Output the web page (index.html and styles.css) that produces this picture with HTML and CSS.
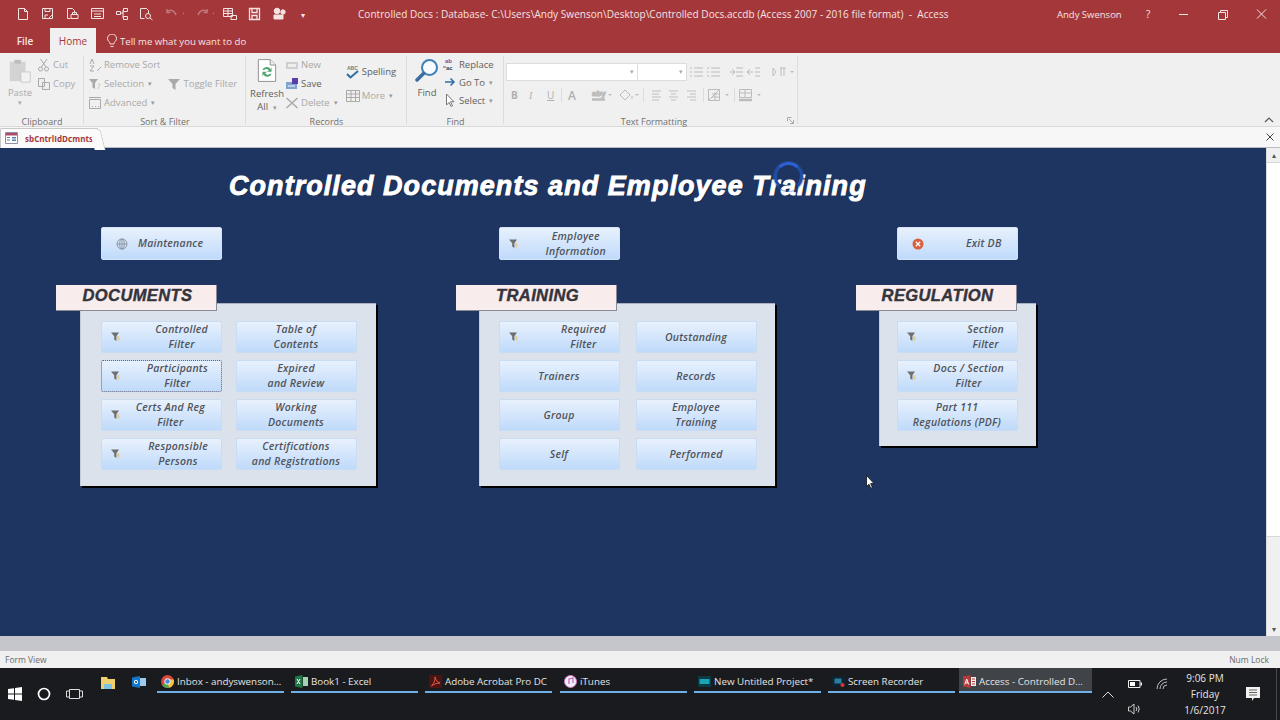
FILE: index.html
```html
<!DOCTYPE html>
<html lang="en">
<head>
<meta charset="utf-8">
<title>Controlled Docs</title>
<link rel="stylesheet" href="styles.css">
</head>
<body>
<svg class="defs" width="0" height="0" aria-hidden="true">
  <symbol id="funnel" viewBox="0 0 12 12"><path d="M1 1.500h8L6.400 5.200V10L4.200 8.600V5.200z" fill="#6f6f6f"/><path d="M7.200 5.500l2.200-.6L8.800 7.600l1.400-.3-2.200 3.600.5-2.700-1.200.2z" fill="#e3c98a"/></symbol>
</svg>
<header class="titlebar">
  <div class="qat">
    <svg width="300" height="16" viewBox="0 0 300 16" fill="none" stroke="#f4e3e3" stroke-width="1">
      <path d="M18.500 2.500h6l3 3v8h-9zM24.500 2.500v3h3"/>
      <path d="M42.500 2.500h10v10h-10zM45 2.500v3h5v-3M45 12v-3h3M48 13l4-4"/>
      <path d="M67.500 2.500h5l2 2v3M67.500 2.500v10h3M71 8.500h7v4h-7zM72.500 8.500v-2h4v2"/>
      <path d="M91.500 2.500h12v10h-12zM91.500 5h12M94 8h7M94 10.500h7"/>
      <path d="M116.500 5.500h4v3h-4zM123.500 2.500h4v3h-4zM123.500 10.500h4v3h-4zM120.500 7h3M123 4v8"/>
      <path d="M140.500 2.500h6l2 2v3M140.500 2.500v10h4"/><circle cx="148" cy="10" r="2.500"/><path d="M150 12l2.500 2"/>
      <path d="M167 6c3-3 7-2 9 3M167 3v3.500h3.500M183 7.500h1" stroke="#c07578" stroke-width="1.500"/>
      <path d="M207 6c-3-3-7-2-9 3M207 3v3.500h-3.500M213 7.500h1" stroke="#c07578" stroke-width="1.500"/>
      <path d="M223.500 2.500h9v8h-9zM223.500 5h9M223.500 7.500h9M228 2.500v8M231 9.500h5.500v4H231z"/>
      <path d="M249.500 2.500h10v11h-10zM252 2.500v4h5v-4M252 13.500v-4h5v4" stroke-width="1.300"/>
      <circle cx="277" cy="5" r="2.800" fill="#f4e3e3"/><circle cx="283" cy="6" r="2.200" fill="#f4e3e3"/><path d="M274 9h9v4h-9z" fill="#f4e3e3"/>
    </svg>
    <span class="qat-more">▾</span>
  </div>
  <div class="doc-title">Controlled Docs : Database- C:\Users\Andy Swenson\Desktop\Controlled Docs.accdb (Access 2007 - 2016 file format)  -  Access</div>
  <div class="user">Andy Swenson</div>
  <div class="help">?</div>
  <div class="winbtns">
    <svg width="90" height="14" viewBox="0 0 90 14" fill="none" stroke="#f4e3e3"><path d="M0 7.500h9"/><path d="M39.500 5.500h7v7h-7zM41.500 5.500v-2h7v7h-2"/><path d="M78 2.500l9 9M87 2.500l-9 9"/></svg>
  </div>
</header>
<nav class="tabs">
  <span class="tab-file">File</span>
  <span class="tab-home">Home</span>
  <span class="tell">
    <svg width="10" height="14" viewBox="0 0 10 14" fill="none" stroke="#f6e4e4"><path d="M3.200 10c0-2-2.700-3-2.700-5.500a4.500 4.500 0 0 1 9 0C9.500 7 6.800 8 6.800 10zM3.500 12.500h3"/></svg>
    Tell me what you want to do
  </span>
</nav>
<section class="ribbon">
  <div class="group g-clip">
    <div class="group-body clip-body">
      <div class="big paste">
        <svg width="24" height="26" viewBox="0 0 24 28"><path d="M1 4h17v21H1z" fill="#d3d3d3"/><path d="M6 2h7v4H6z" fill="#bdbdbd"/><path d="M13 15h10v11H13z" fill="#f2f2f2" stroke="#c9c9c9"/></svg>
        <span>Paste</span><span class="caret-line">▾</span>
      </div>
      <div class="stack">
        <span class="item"><svg width="14" height="14" viewBox="0 0 14 14" fill="none" stroke="#a9a9a9"><circle cx="3.500" cy="11" r="2"/><circle cx="9.500" cy="11" r="2"/><path d="M4.500 9L10 1M9 9L3.500 1"/></svg>Cut</span>
        <span class="item"><svg width="14" height="14" viewBox="0 0 14 14" fill="#eee" stroke="#aaa"><path d="M1.500 1.500h6v8h-6zM5.500 5.500h7v7h-7z"/></svg>Copy</span>
      </div>
    </div>
    <div class="group-label">Clipboard</div>
  </div>
  <div class="group g-sort">
    <div class="group-body sort-body">
      <div class="stack">
        <span class="item"><svg width="14" height="14" viewBox="0 0 14 14" fill="none" stroke="#a9a9a9"><path d="M2 6l2-5 2 5M2 8h4L2 13h4M9 13l4-4"/></svg>Remove Sort</span>
        <span class="item"><svg width="14" height="14" viewBox="0 0 14 14"><path d="M1 2h9L7 6v6L4.500 10.500V6z" fill="#a9a9a9"/><path d="M10 7l2 0-2 5" stroke="#ccc" fill="none"/></svg>Selection<i class="dd">▾</i></span>
        <span class="item"><svg width="14" height="14" viewBox="0 0 14 14" fill="none" stroke="#a9a9a9"><path d="M1.500 3.500h11v9h-11zM1 1.500h12M4 10.500h1M7 10.500h1M10 10.500h1"/></svg>Advanced<i class="dd">▾</i></span>
      </div>
      <span class="item toggle"><svg width="14" height="14" viewBox="0 0 14 14"><path d="M1 2h12L8.500 7v6L5.500 11V7z" fill="#a9a9a9"/></svg>Toggle Filter</span>
    </div>
    <div class="group-label">Sort &amp; Filter</div>
  </div>
  <div class="group g-rec">
    <div class="group-body rec-body">
      <div class="big refresh">
        <svg width="20" height="27" viewBox="0 0 22 27"><path d="M1.500 1.500h13l6 6v18h-19z" fill="#fff" stroke="#8a8a8a"/><path d="M14.500 1.500v6h6" fill="#eee" stroke="#8a8a8a"/><path d="M6 13a5 5 0 0 1 9-1l1-2v5h-5l2-1.500a3 3 0 0 0-5-.5zM16 17a5 5 0 0 1-9 1l-1 2v-5h5l-2 1.500a3 3 0 0 0 5 .5z" fill="#4fa36f"/></svg>
        <span class="active">Refresh</span><span class="active">All <i class="dd">▾</i></span>
      </div>
      <div class="stack rec-mid">
        <span class="item"><svg width="14" height="14" viewBox="0 0 14 14"><path d="M1 4h12v7H1z" fill="#cfcfcf"/><path d="M3 6h8v3H3z" fill="#eee"/></svg>New</span>
        <span class="item active"><svg width="14" height="14" viewBox="0 0 14 14"><path d="M1 5h11v7H1z" fill="#7fa4cf"/><path d="M7 1h6v6H7z" fill="#5b3ea8"/><path d="M3 9h7" stroke="#fff"/></svg>Save</span>
        <span class="item"><svg width="14" height="14" viewBox="0 0 14 14" fill="none" stroke="#a9a9a9" stroke-width="1.500"><path d="M1.500 2l11 10M12.500 2l-11 10"/></svg>Delete<i class="dd">▾</i></span>
      </div>
      <div class="stack rec-right">
        <span class="item active"><svg width="14" height="16" viewBox="0 0 14 16"><text x="1" y="6" class="abc">ABC</text><path d="M1 10l3.500 3.500L12 7" fill="none" stroke="#2f6ea5" stroke-width="2"/></svg>Spelling</span>
        <span class="item"><svg width="14" height="14" viewBox="0 0 14 14" fill="none" stroke="#aaa"><path d="M.5 1.500h13v11H.5zM.5 5h13M.5 8.500h13M5 1.500v11M9.500 1.500v11"/></svg>More<i class="dd">▾</i></span>
      </div>
    </div>
    <div class="group-label">Records</div>
  </div>
  <div class="group g-find">
    <div class="group-body find-body">
      <div class="big find">
        <svg width="24" height="26" viewBox="0 0 24 26" fill="none" stroke="#3f7fb8"><circle cx="14.500" cy="9.500" r="7.500" stroke-width="2" fill="#f8fbfd"/><path d="M8.500 15.500L2 22" stroke-width="3.500" stroke-linecap="round" stroke="#3a6ea0"/></svg>
        <span class="active">Find</span>
      </div>
      <div class="stack find-stack">
        <span class="item active"><svg width="14" height="14" viewBox="0 0 14 14"><text x="2" y="6" class="ab">ab</text><text x="3" y="12.500" class="ac">ac</text><path d="M0 10h3" stroke="#2f6ea5"/></svg>Replace</span>
        <span class="item active"><svg width="14" height="14" viewBox="0 0 14 14" fill="none" stroke="#2f6ea5" stroke-width="1.500"><path d="M2 7h9M7.500 3.500L11 7l-3.500 3.500"/></svg>Go To<i class="dd">▾</i></span>
        <span class="item active"><svg width="14" height="14" viewBox="0 0 14 14" fill="#fff" stroke="#777"><path d="M3.500 1v11l2.500-2.500 2 4 1.500-.7-2-4h3.500z"/></svg>Select<i class="dd">▾</i></span>
      </div>
    </div>
    <div class="group-label">Find</div>
  </div>
  <div class="group g-text">
    <div class="group-body text-body">
      <div class="text-row row-a">
        <span class="combo combo-font">▾</span><span class="combo combo-size">▾</span>
        <svg class="r1" width="106" height="14" viewBox="0 0 106 14" fill="none" stroke="#bcbcbc"><path d="M5 3h9M5 7h9M5 11h9M1 3h2M1 7h2M1 11h2M22 3h9M22 7h9M22 11h9M18 3h2M18 7h2M18 11h2M41 7h4M43 4l3 3-3 3M47 3h7M47 7h7M47 11h7M64 7h-5M61 4l-3 3 3 3M66 3h5M66 7h5M66 11h5"/><path d="M91 3h6M92 3v8M95 3v8M84 3v8l3-4z"/><path d="M101 6h4l-2 2z" fill="#bcbcbc" stroke="none"/></svg>
      </div>
      <div class="text-row row-b">
        <b>B</b><i class="it">I</i><u>U</u>
        <span class="sep"></span>
        <span class="fa">A</span>
        <svg width="175" height="16" viewBox="0 0 175 16" fill="none" stroke="#bcbcbc"><text x="2" y="9" class="aby">aby</text><path d="M2 12.500h13" stroke-width="2.500"/><path d="M30 8l5-5 5 5-5 5zM42 9v3"/><path d="M53.500 1v14M113.500 1v14M144.500 1v14" stroke="#dcdcdc"/><path d="M62 4h9M62 7h7M62 10h9M62 13h7M79 4h9M81 7h5M79 10h9M81 13h5M97 4h9M100 7h6M97 10h9M100 13h6" stroke-width="1.500" stroke="#cfcfcf"/><path d="M118.500 2.500h11v11h-11zM118.500 13.500l11-11M122 7h7M122 10h7M125 5v8"/><path d="M149.500 2.500h12v8h-12zM149.500 6h12M155 2.500v8"/><path d="M149 13h13" stroke-width="2.500"/><path d="M-5 7h4l-2 2zM18 7h4l-2 2zM45 7h4l-2 2zM135 7h4l-2 2zM167 7h4l-2 2z" fill="#bcbcbc" stroke="none"/></svg>
      </div>
    </div>
    <div class="group-label">Text Formatting</div>
    <svg class="launcher" width="7" height="7" viewBox="0 0 7 7" fill="none" stroke="#aaa"><path d="M.5 .5h4M.5 .5v4M2 2l4.500 4.500M6.500 3v3.500H3"/></svg>
  </div>
  <svg class="collapse" width="10" height="6" viewBox="0 0 10 6" fill="none" stroke="#555" stroke-width="1.200"><path d="M1 5l4-4 4 4"/></svg>
</section>
<div class="docbar">
  <div class="doctab">
    <svg width="13" height="12" viewBox="0 0 13 12"><path d="M.5 .5h12v11H.5z" fill="#fff" stroke="#8f8fa8"/><path d="M1 1h11v2.500H1z" fill="#b04a6b"/><path d="M2 5h3v1H2zM2 7.500h3v1H2zM7 5h4v1.500H7zM7 7.500h4V9H7z" fill="#5b7fae"/></svg>
    <span>sbCntrlIdDcmnts</span>
  </div>
  <svg class="docclose" width="8" height="8" viewBox="0 0 8 8" fill="none" stroke="#444"><path d="M.5 .5l7 7M7.500 .5l-7 7"/></svg>
</div>
<main class="workspace">
  <div class="form">
    <h1 class="form-title">Controlled Documents and Employee Training</h1>
    <div class="spinner"></div>
    <div class="sections">
      <section class="sec sec-a">
        <button class="btn top icon-btn"><svg class="ico" width="12" height="12" viewBox="0 0 12 12" fill="none" stroke="#8d96a3"><circle cx="6" cy="6" r="5"/><ellipse cx="6" cy="6" rx="2.300" ry="5"/><path d="M1 6h10M6 1v10"/></svg><span>Maintenance</span></button>
        <h2 class="sec-head">DOCUMENTS</h2>
        <div class="panel">
          <button class="btn icon-btn right"><svg class="ico f"><use href="#funnel"/></svg><span>Controlled<br>Filter</span></button>
          <button class="btn">Table of<br>Contents</button>
          <button class="btn icon-btn right focus"><svg class="ico f"><use href="#funnel"/></svg><span>Participants<br>Filter</span></button>
          <button class="btn">Expired<br>and Review</button>
          <button class="btn icon-btn right"><svg class="ico f"><use href="#funnel"/></svg><span class="mid">Certs And Reg<br>Filter</span></button>
          <button class="btn">Working<br>Documents</button>
          <button class="btn icon-btn right"><svg class="ico f"><use href="#funnel"/></svg><span>Responsible<br>Persons</span></button>
          <button class="btn">Certifications<br>and Registrations</button>
        </div>
      </section>
      <section class="sec sec-b">
        <button class="btn top icon-btn right"><svg class="ico f"><use href="#funnel"/></svg><span>Employee<br>Information</span></button>
        <h2 class="sec-head">TRAINING</h2>
        <div class="panel">
          <button class="btn icon-btn right"><svg class="ico f"><use href="#funnel"/></svg><span>Required<br>Filter</span></button>
          <button class="btn">Outstanding</button>
          <button class="btn">Trainers</button>
          <button class="btn">Records</button>
          <button class="btn">Group</button>
          <button class="btn">Employee<br>Training</button>
          <button class="btn">Self</button>
          <button class="btn">Performed</button>
        </div>
      </section>
      <section class="sec sec-c">
        <button class="btn top icon-btn"><svg class="ico exit" width="12" height="12" viewBox="0 0 12 12"><circle cx="6" cy="6" r="5.500" fill="#d9603f"/><path d="M3.800 3.800l4.400 4.400M8.200 3.800L3.800 8.200" stroke="#fff" stroke-width="1.300"/></svg><span class="exit-label">Exit DB</span></button>
        <h2 class="sec-head">REGULATION</h2>
        <div class="panel single">
          <button class="btn icon-btn right"><svg class="ico f"><use href="#funnel"/></svg><span>Section<br>Filter</span></button>
          <button class="btn icon-btn right"><svg class="ico f"><use href="#funnel"/></svg><span>Docs / Section<br>Filter</span></button>
          <button class="btn">Part 111<br>Regulations (PDF)</button>
        </div>
      </section>
    </div>
    <svg class="cursor" width="9" height="14" viewBox="0 0 9 14"><path d="M.5 .5v11l2.500-2.300 1.800 4 1.600-.7-1.800-3.900H8z" fill="#fff" stroke="#000" stroke-width=".7"/></svg>
  </div>
  <div class="vscroll"><span class="arrow">▴</span><span class="thumb"></span><span class="arrow">▾</span></div>
</main>
<div class="hscroll"></div>
<footer class="status"><span>Form View</span><span>Num Lock</span></footer>
<div class="taskbar">
  <div class="start">
    <svg width="14" height="14" viewBox="0 0 14 14" fill="#fff"><path d="M0 2l6-.8V6.500H0zM7 1l7-1v6.500H7zM0 7.500h6v5.300L0 12zM7 7.500h7V14l-7-1z"/></svg>
    <svg width="14" height="14" viewBox="0 0 14 14" fill="none" stroke="#fff" stroke-width="1.700"><circle cx="7" cy="7" r="5.500"/></svg>
    <svg width="17" height="12" viewBox="0 0 17 12" fill="none" stroke="#ddd"><path d="M3.500 1.500h10v9h-10zM3.500 3H.5v6h3M13.500 3h3v6h-3"/></svg>
  </div>
  <div class="pins">
    <svg width="14" height="13" viewBox="0 0 14 13"><path d="M0 1h6l1 2h7v10H0z" fill="#f0cf6f"/><path d="M3 8h8v5H3z" fill="#7ec3e6"/></svg>
    <svg width="14" height="12" viewBox="0 0 14 12"><path d="M0 1.500L8 0v12l-8-1.500z" fill="#1576c9"/><path d="M8 2h6v8H8z" fill="#9ccbef"/><circle cx="4" cy="6" r="1.700" fill="none" stroke="#fff"/></svg>
  </div>
  <div class="apps">
    <a class="app"><svg width="13" height="13" viewBox="0 0 13 13"><circle cx="6.500" cy="6.500" r="6.500" fill="#d8483b"/><path d="M6.500 6.500L1 10a6.500 6.500 0 0 0 7 2.800z" fill="#4da853"/><path d="M6.500 6.500L8 12.800A6.500 6.500 0 0 0 12.700 4.500H6.500z" fill="#f3c53a"/><circle cx="6.500" cy="6.500" r="2.800" fill="#4a8be0" stroke="#fff"/></svg>Inbox - andyswenson...</a>
    <a class="app"><svg width="13" height="13" viewBox="0 0 13 13"><path d="M0 1.500L7.500 0v13L0 11.500z" fill="#1e7a45"/><path d="M8 2h5v9H8z" fill="#a7d1b6"/><path d="M2 4l3 5M5 4L2 9" stroke="#fff"/></svg>Book1 - Excel</a>
    <a class="app"><svg width="13" height="13" viewBox="0 0 13 13"><path d="M0 0h13v13H0z" fill="#4e1414"/><path d="M2.500 11c3-3 4-7 3.500-9 .5 3 2 5 5 6-3 0-6 1-8.500 3z" fill="none" stroke="#e25a4e"/></svg>Adobe Acrobat Pro DC</a>
    <a class="app w-tunes"><svg width="13" height="13" viewBox="0 0 13 13"><circle cx="6.500" cy="6.500" r="6" fill="#eef" stroke="#d87ab5"/><path d="M5 9V4l4-1v5" fill="none" stroke="#c55fb0" stroke-width="1.200"/></svg>iTunes</a>
    <a class="app"><svg width="13" height="13" viewBox="0 0 13 13"><path d="M0 1h13v11H0z" fill="#0c3a44"/><path d="M1.500 4h10v5h-10z" fill="#18a5b5"/></svg>New Untitled Project*</a>
    <a class="app w-rec"><svg width="13" height="13" viewBox="0 0 13 13"><path d="M0 1h13v11H0z" fill="#0f2230"/><path d="M2.500 3.500h7v5h-7z" fill="#2b7ea0"/><circle cx="10.500" cy="10" r="2" fill="#d33"/></svg>Screen Recorder</a>
    <a class="app current"><svg width="13" height="13" viewBox="0 0 13 13"><path d="M0 1.500L7.500 0v13L0 11.500z" fill="#b8393c"/><path d="M8 2h5v9H8z" fill="#eee"/><path d="M9 4h3M9 6.500h3M9 9h3" stroke="#b8393c"/><path d="M1.800 9.500L3.700 4l2 5.500M2.500 7.800h2.500" stroke="#fff" fill="none"/></svg>Access - Controlled D...</a>
  </div>
  <svg class="chev" width="12" height="7" viewBox="0 0 12 7" fill="none" stroke="#ddd"><path d="M.5 6.500L6 1l5.500 5.500"/></svg>
  <div class="tray">
    <svg width="14" height="8" viewBox="0 0 14 8"><path d="M.5 .5h11.500v7H.5z" fill="none" stroke="#eee"/><path d="M2 2h5v4H2z" fill="#fff"/><path d="M12.500 2.500H14v3h-1.500z" fill="#eee"/></svg>
    <svg width="12" height="12" viewBox="0 0 12 12" fill="none" stroke="#bbb"><path d="M1 11A10 10 0 0 1 11 1M4 11A7 7 0 0 1 11 4M7 11A4 4 0 0 1 11 7"/></svg>
    <svg class="vol" width="14" height="12" viewBox="0 0 14 12" fill="none" stroke="#ccc"><path d="M.5 4h2L6 1v10L2.500 8h-2zM8 4a3 3 0 0 1 0 4M10 2.500a6 6 0 0 1 0 7"/></svg>
  </div>
  <div class="clock"><span>9:06 PM</span><span>Friday</span><span>1/6/2017</span></div>
  <svg class="notif" width="14" height="14" viewBox="0 0 14 14"><path d="M0 0h14v11H8l-2 3v-3H0z" fill="#f2f2f2"/><path d="M3 3h8M3 5.500h8M3 8h8" stroke="#666"/></svg>
</div>
</body>
</html>
```

FILE: styles.css
```css
* { box-sizing: border-box; }
html, body { margin: 0; padding: 0; }
body {
  width: 1280px; height: 720px; overflow: hidden;
  display: flex; flex-direction: column;
  font-family: "Open Sans", "Liberation Sans", sans-serif;
  font-size: 9.500px; color: #a9a9a9; background: #f0f0f0;
}
.defs { position: absolute; }

.titlebar {
  height: 28px; flex: none; background: #a4373a; color: #f4e3e3;
  display: flex; align-items: center;
}
.qat { display: flex; align-items: center; width: 310px; flex: none; }
.qat svg { flex: none; }
.qat-more { font-size: 8px; margin-left: 1px; }
.doc-title { margin-left: 48px; width: 699px; white-space: pre; font-size: 10px; letter-spacing: .045px; flex: none; }
.user { width: 87px; font-size: 9.500px; flex: none; }
.help { width: 35px; font-size: 10px; flex: none; padding-left: 2px; }
.winbtns { flex: none; display: flex; }

.tabs {
  height: 25px; flex: none; background: #a4373a; color: #f6e4e4;
  display: flex; align-items: flex-end; font-size: 10px;
}
.tab-file { width: 50px; text-align: center; padding-bottom: 5px; font-weight: 600; }
.tab-home { width: 46px; height: 25px; background: #f0f0f0; color: #a4373a; display: flex; align-items: center; justify-content: center; padding-top: 1px; }
.tell { display: flex; align-items: center; gap: 3px; margin-left: 11px; height: 25px; padding-top: 1px; font-size: 9.600px; }

.ribbon {
  height: 74px; flex: none; background: #f0f0f0; display: flex; position: relative;
  border-bottom: 1px solid #d9d9d9; padding-top: 1px;
}
.group {
  display: flex; flex-direction: column; height: 72px; flex: none; position: relative;
  background: linear-gradient(#dcdcdc, #dcdcdc) no-repeat right 2px / 1px 68px;
}
.group-body { flex: 1; display: flex; min-height: 0; }
.group-label { height: 13px; margin-bottom: -2px; text-align: center; color: #707070; font-size: 9px; line-height: 13px; }
.g-clip { width: 84px; }
.g-sort { width: 162px; }
.g-rec { width: 161px; }
.g-find { width: 97px; }
.g-text { width: 294px; }
.g-text .group-label { padding-left: 6px; }
.clip-body { padding-left: 8px; gap: 5px; }
.sort-body { padding-left: 4px; }
.rec-body { padding-left: 4px; }
.find-body { padding-left: 8px; }
.text-body { flex-direction: column; padding: 8px 0 0 2px; gap: 4px; }
.big { display: flex; flex-direction: column; align-items: center; line-height: 12px; flex: none; }
.big svg { margin-bottom: 3px; }
.paste { width: 24px; padding-top: 4px; }
.caret-line { font-size: 7px; line-height: 8px; }
.refresh { width: 34px; padding-top: 3px; line-height: 13px; }
.find { width: 24px; padding-top: 4px; margin-right: 4px; }
.stack { display: flex; flex-direction: column; flex: none; padding-top: 1px; }
.item { display: flex; align-items: center; gap: 2px; height: 19px; white-space: nowrap; }
.item svg { flex: none; }
.toggle { margin-left: 7px; margin-top: 20px; height: 19px; }
.rec-mid { margin-left: 1px; }
.rec-right { margin-left: 8px; padding-top: 8px; gap: 5px; }
.find-stack { padding-top: 1px; }
.find-stack .item { height: 18px; }
.active { color: #5f5f5f; }
.dd { font-style: normal; font-size: 7px; margin-left: 2px; color: #999; }
.abc { font: 700 5px "Liberation Sans", sans-serif; fill: #777; }
.ab { font: 700 6px "Liberation Sans", sans-serif; fill: #7a4fa0; }
.ac { font: 700 6px "Liberation Sans", sans-serif; fill: #444; }
.aby { font: 700 8px "Liberation Sans", sans-serif; fill: #bbb; }
.text-row { display: flex; align-items: center; }
.row-a { height: 19px; }
.combo { display: block; background: #fff; border: 1px solid #dcdcdc; height: 18px; text-align: right; line-height: 16px; font-size: 7px; color: #aaa; padding-right: 3px; }
.combo-font { width: 132px; }
.combo-size { width: 50px; margin-left: -1px; }
.r1 { margin-left: 2px; }
.row-b { height: 20px; font-size: 10px; color: #b0b0b0; padding-left: 5px; }
.row-b b { width: 18px; }
.row-b .it { width: 18px; font-family: "Liberation Serif", serif; }
.row-b u { width: 14px; }
.sep { width: 1px; height: 14px; background: #dcdcdc; margin-right: 6px; }
.fa { width: 22px; font-size: 12px; font-weight: 600; }
.launcher { position: absolute; right: 4px; bottom: 2px; }
.collapse { position: absolute; right: 6px; bottom: 3px; }

.docbar {
  height: 21px; flex: none; background: #f7f7f7; display: flex; align-items: flex-end; justify-content: space-between;
  border-bottom: 1px solid #b9bcc2;
}
.doctab {
  width: 98px; height: 20px; display: flex; align-items: center; gap: 7px; padding: 0 0 1px 4px;
  color: #a4373a; font-size: 8px; letter-spacing: .05px; font-weight: 700; background: #fbfbfb; position: relative;
  border-top: 1px solid #c9c9c9; border-left: 1px solid #c9c9c9; margin-bottom: -1px; border-radius: 2px 0 0 0;
}
.doctab::after {
  content: ""; position: absolute; right: -5px; top: -1px; width: 10px; height: 21px; background: #fbfbfb;
  border-top: 1px solid #c9c9c9; border-right: 1px solid #c9c9c9; border-radius: 0 5px 0 0; transform: skewX(14deg);
}
.docclose { margin: 0 6px 6px 0; }

.workspace { height: 488px; flex: none; display: flex; background: #1e3561; }
.form { flex: 1; position: relative; min-width: 0; padding-top: 22px; }
.form-title {
  margin: 0 0 0 229px; font: italic 700 27px/32px "Liberation Sans", sans-serif; color: #fff; letter-spacing: 1.050px;
  -webkit-text-stroke: .9px #fff; text-shadow: 1px 1px 0 #12203a; white-space: nowrap; height: 57px;
}
.spinner { position: absolute; left: 774px; top: 14px; width: 29px; height: 29px; border-radius: 50%; border: 3px solid #1d4ea8; border-top-color: #2a62d8; border-bottom-color: transparent; box-shadow: 0 0 0 1px rgba(50, 90, 170, .45); }
.sections { display: flex; padding-left: 56px; }
.sec { width: 400px; flex: none; }
.btn {
  display: flex; align-items: center; justify-content: center; text-align: center;
  width: 121px; height: 32px; padding: 0 1px 0 0; border: 1px solid #c8dcf3; border-radius: 2px;
  background: linear-gradient(#e8f1fd, #bfdafa);
  font: italic 600 10.500px/15px "Open Sans", "Liberation Sans", sans-serif; letter-spacing: .25px; color: #50535a;
}
.top { height: 33px; border-color: #d3e2f4; margin-bottom: 25px; }
.sec-a .top { margin-left: 45px; }
.sec-b .top { margin-left: 43px; }
.sec-c .top { margin-left: 41px; }
.icon-btn { justify-content: flex-start; position: relative; padding-left: 36px; }
.icon-btn.right { justify-content: flex-end; padding: 0 13px 0 30px; }
.icon-btn .mid { white-space: nowrap; margin-right: 3px; }
.ico { position: absolute; left: 14px; top: 50%; margin-top: -6px; }
.ico.f { width: 12px; height: 12px; left: 8px; }
.sec-head {
  margin: 0; width: 161px; height: 26px; background: #f9ecec; border-bottom: 1px solid #8a8a94; border-right: 1px solid #8a8a94;
  font: italic 700 16.500px/21px "Liberation Sans", sans-serif; letter-spacing: .4px; -webkit-text-stroke: .4px #33343c;
  color: #33343c; text-align: center; position: relative; z-index: 1; padding-left: 3px;
}
.panel {
  width: 296px; height: 183px; margin: -8px 0 0 24px; padding: 17px 0 0 20px;
  background: #dce2ec; border-top: 1px solid #aab0bd; border-left: 1px solid #c6ccd8;
  box-shadow: 2px 2px 0 #000;
  display: grid; grid-template-columns: 121px 121px; column-gap: 14px; grid-auto-rows: 32px; row-gap: 7px;
}
.sec-b .panel { margin-left: 23px; padding-left: 19px; column-gap: 16px; }
.sec-c .panel { margin-left: 23px; }
.panel.single { width: 157px; height: 143px; padding-left: 17px; grid-template-columns: 121px; }
.btn.focus { outline: 1px dotted #667; outline-offset: -1px; }
.exit-label { margin-left: 32px; }
.cursor { position: absolute; left: 866px; top: 327px; }

.vscroll { width: 14px; flex: none; background: #f0f0f0; display: flex; flex-direction: column; align-items: center; border-left: 1px solid #dcdcdc; }
.vscroll .arrow { height: 14px; font-size: 8px; line-height: 14px; color: #555; flex: none; }
.vscroll .thumb { flex: 1; margin-bottom: 85px; width: 13px; background: #fff; border-top: 1px solid #d8d8d8; border-bottom: 1px solid #d8d8d8; }
.hscroll { height: 15px; flex: none; background: #c4c6cb; }
.status { height: 17px; flex: none; display: flex; justify-content: space-between; align-items: center; background: #f0f0f0; padding: 0 11px 0 5px; font-size: 8.500px; color: #6a6a6a; }

.taskbar { height: 52px; flex: none; background: #1a1b1f; display: flex; color: #e4e4e4; font-size: 9.800px; position: relative; }
.taskbar::after { content: ""; position: absolute; right: 3px; top: 0; width: 1px; height: 52px; background: #45474c; }
.start { display: flex; align-items: center; width: 100px; flex: none; padding-left: 8px; gap: 15px; height: 52px; }
.pins { display: flex; gap: 17px; width: 56px; flex: none; padding-top: 8px; margin-left: 1px; height: 20px; }
.apps { display: flex; gap: 7px; flex: none; }
.app { display: flex; align-items: flex-start; gap: 2px; width: 127px; height: 25px; padding: 7px 0 0 4px; border-bottom: 2px solid #6fb0e6; white-space: nowrap; line-height: 13px; }
.app svg { flex: none; margin-right: 1px; }
.w-tunes { margin-left: 1px; }
.w-rec { margin-right: -3px; }
.app.current { width: 133px; background: #404348; }
.chev { position: absolute; left: 1102px; top: 23px; }
.tray { position: absolute; left: 1128px; top: 10px; display: grid; grid-template-columns: 14px 12px; column-gap: 14px; row-gap: 13px; align-items: center; }
.vol { grid-column: 1; }
.clock { position: absolute; left: 1176px; top: 2px; width: 58px; display: flex; flex-direction: column; align-items: center; line-height: 16px; font-size: 10px; }
.notif { position: absolute; left: 1246px; top: 19px; }
```
